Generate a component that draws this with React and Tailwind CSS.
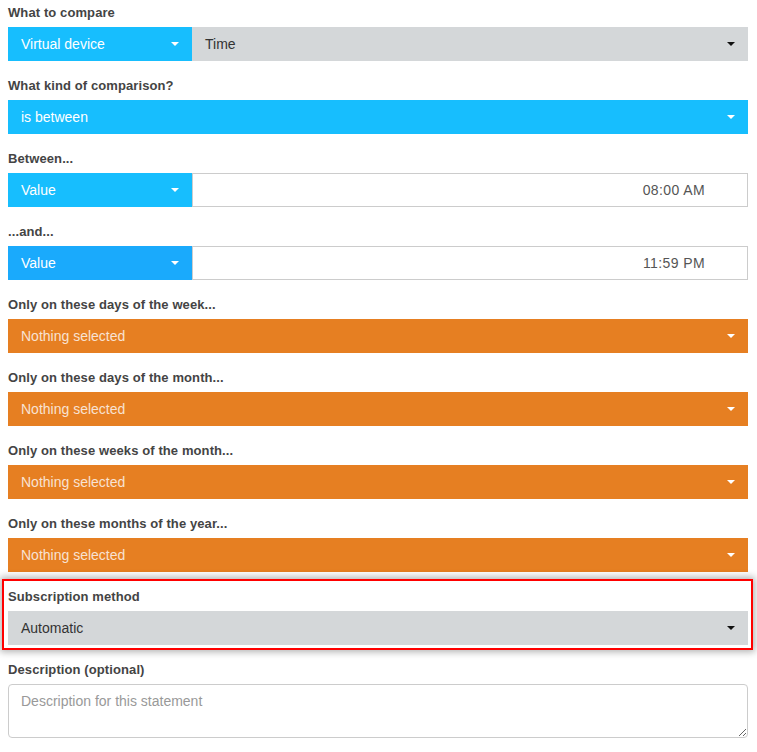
import React from "react";

const Caret = ({ color = "white" }) => (
  <svg width="8" height="4" viewBox="0 0 8 4" className="shrink-0">
    <polygon points="0,0 8,0 4,4" fill={color} />
  </svg>
);

const Label = ({ children }) => (
  <div className="text-[13px] font-bold leading-[19px] pt-[3px] mb-[5px] text-[#444] tracking-[0.1px]">{children}</div>
);

const BlueSelect = ({ text, bg = "bg-[#17befe]", width = "w-[184px]" }) => (
  <div className={`${bg} ${width} h-[34px] flex items-center justify-between pl-[13px] pr-[13px] text-white text-[14px] shrink-0`}>
    <span>{text}</span>
    <Caret />
  </div>
);

const OrangeSelect = () => (
  <div className="bg-[#e67f22] h-[34px] flex items-center justify-between pl-[13px] pr-[13px] text-[#f8e2d2] text-[14px]">
    <span>Nothing selected</span>
    <Caret />
  </div>
);

const GraySelect = ({ text, className = "" }) => (
  <div className={`bg-[#d4d7d9] h-[34px] flex items-center justify-between pl-[13px] pr-[13px] text-[#333] text-[14px] ${className}`}>
    <span>{text}</span>
    <Caret color="#111" />
  </div>
);

const TimeRow = ({ value, blue }) => (
  <div className="flex h-[34px]">
    <BlueSelect text="Value" bg={blue} />
    <div className="flex-1 border border-[#ccc] flex items-center justify-end pr-[42px] text-[14px] text-[#555]">
      <span className="tracking-[0.4px]">{value}</span>
    </div>
  </div>
);

export default function App() {
  return (
    <div
      className="w-[757px] h-[752px] bg-white overflow-hidden"
      style={{ fontFamily: '"Liberation Sans", Arial, sans-serif' }}
    >
      <div className="w-[740px] ml-2 flex flex-col gap-[12px]">
        <div>
          <Label>What to compare</Label>
          <div className="flex">
            <BlueSelect text="Virtual device" />
            <GraySelect text="Time" className="flex-1" />
          </div>
        </div>
        <div>
          <Label>What kind of comparison?</Label>
          <div className="bg-[#17befe] h-[34px] flex items-center justify-between pl-[13px] pr-[13px] text-white text-[14px]">
            <span>is between</span>
            <Caret />
          </div>
        </div>
        <div>
          <Label>Between...</Label>
          <TimeRow value="08:00 AM" blue="bg-[#17befe]" />
        </div>
        <div>
          <Label>...and...</Label>
          <TimeRow value="11:59 PM" blue="bg-[#1aaafc]" />
        </div>
        <div>
          <Label>Only on these days of the week...</Label>
          <OrangeSelect />
        </div>
        <div>
          <Label>Only on these days of the month...</Label>
          <OrangeSelect />
        </div>
        <div>
          <Label>Only on these weeks of the month...</Label>
          <OrangeSelect />
        </div>
        <div>
          <Label>Only on these months of the year...</Label>
          <OrangeSelect />
        </div>
        <div className="relative">
          <div className="absolute top-[-5px] left-[-6px] right-[-5px] bottom-[-5px] border-2 border-[#f00] shadow-[0_0_7px_2px_rgba(0,0,0,0.3)] pointer-events-none" />
          <Label>Subscription method</Label>
          <GraySelect text="Automatic" />
        </div>
        <div>
          <Label>Description (optional)</Label>
          <textarea
            placeholder="Description for this statement"
            className="block w-full h-[54px] border border-[#ccc] rounded-[4px] px-[12px] py-[6px] text-[14px] text-[#555] placeholder:text-[#999] outline-none"
            style={{ fontFamily: '"Liberation Sans", Arial, sans-serif' }}
          />
        </div>
      </div>
    </div>
  );
}
